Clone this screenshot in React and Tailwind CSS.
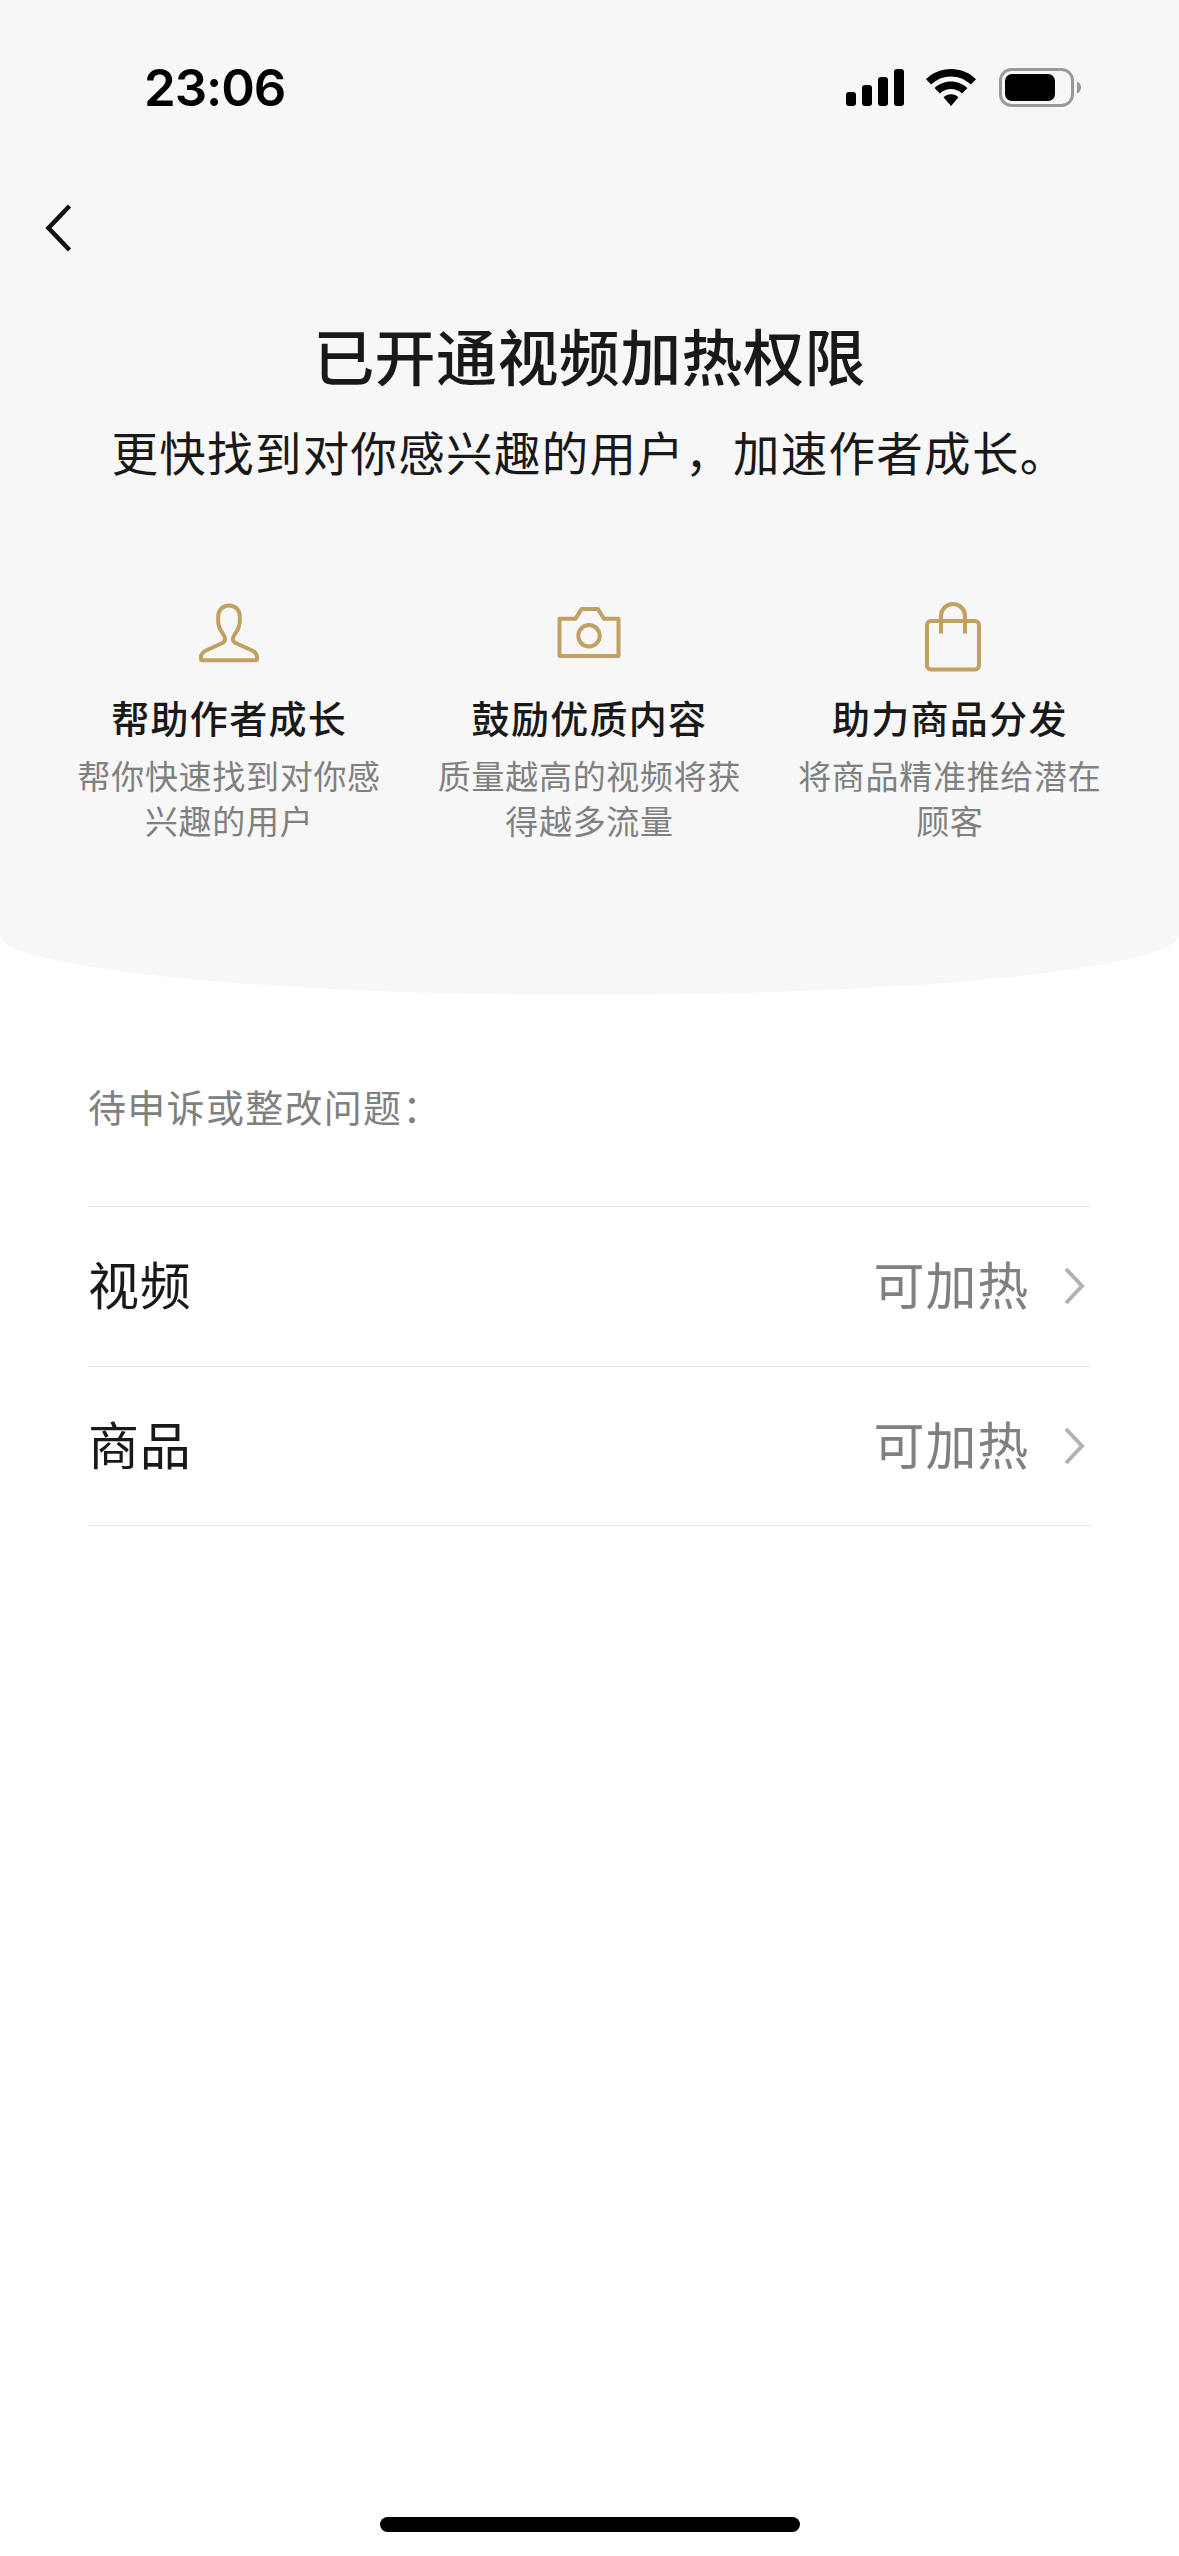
const features = [
    {
        icon: (
            <svg viewBox="0 0 72 72" fill="none" stroke="currentColor" strokeWidth="4" strokeLinejoin="round" className="w-[72px] h-[72px]">
                <path d="M36 5.500c-6.500 0-10.800 4.800-10.800 10.700v5c0 5 2 8.600 4.600 12.400 1.500 2.200 2.300 3.600 2.300 5.300 0 2.400-1.300 3.500-3.800 4.600L13.500 50.200C9.800 51.900 8 54 8 57.200v1.500c0 1 .5 1.500 1.500 1.500h53c1 0 1.500-.5 1.500-1.500v-1.500c0-3.200-1.800-5.300-5.500-7L43.700 43.500c-2.500-1.100-3.800-2.200-3.800-4.600 0-1.700.8-3.100 2.300-5.300 2.600-3.800 4.600-7.400 4.600-12.400v-5C46.800 10.300 42.500 5.500 36 5.500z" />
            </svg>
        ),
        title: '帮助作者成长',
        description: '帮你快速找到对你感兴趣的用户',
    },
    {
        icon: (
            <svg viewBox="0 0 72 72" fill="none" stroke="currentColor" strokeWidth="4" strokeLinejoin="round" className="w-[72px] h-[72px]">
                <path d="M6.500 18.800h16l6-9.700h16.500l6 9.700h14.500v37.200h-59z" />
                <circle cx="36" cy="35.800" r="10.700" />
            </svg>
        ),
        title: '鼓励优质内容',
        description: '质量越高的视频将获得越多流量',
    },
    {
        icon: (
            <svg viewBox="0 0 72 72" fill="none" stroke="currentColor" strokeWidth="4" className="w-[72px] h-[72px]">
                <rect x="13" y="21" width="52" height="48.500" rx="4" />
                <path d="M27 33.500V16a12 12 0 0 1 24 0v17.500" />
            </svg>
        ),
        title: '助力商品分发',
        description: '将商品精准推给潜在顾客',
    },
];

const issues = [
    { name: '视频', status: '可加热' },
    { name: '商品', status: '可加热' },
];

function StatusBar() {
    return (
        <div className="flex items-center justify-between h-[175px] pl-[144px] pr-[98px]">
            <span className="font-['Inter',sans-serif] font-semibold text-[51px] leading-none tracking-[-1.1px] text-black">23:06</span>
            <div className="flex items-center">
                {/* Signal */}
                <svg width="58" height="40" viewBox="0 0 58 40" fill="#000">
                    <rect x="0" y="24" width="10" height="14" rx="3" />
                    <rect x="16" y="17" width="10" height="21" rx="3" />
                    <rect x="32" y="9" width="10" height="29" rx="3" />
                    <rect x="48" y="1" width="10" height="37" rx="3" />
                </svg>
                {/* Wifi */}
                <svg width="50" height="40" viewBox="0 0 50 40" fill="#000" className="ml-[22px]">
                    <path d="M25 1C15.500 1 6.500 4.700 0 11.200l5.200 5.400C10.500 11.400 17.500 8.500 25 8.500s14.500 2.900 19.800 8.100l5.200-5.400C43.500 4.700 34.500 1 25 1z" />
                    <path d="M25 13.500c-6.200 0-12 2.400-16.400 6.600l5.300 5.400c3-2.900 6.900-4.500 11.100-4.500s8.100 1.600 11.100 4.500l5.300-5.400C37 15.900 31.200 13.500 25 13.500z" />
                    <path d="M25 26.200c-2.900 0-5.500 1.100-7.500 3L25 38l7.500-8.800c-2-1.900-4.600-3-7.500-3z" />
                </svg>
                {/* Battery */}
                <svg width="82" height="40" viewBox="0 0 82 40" className="ml-[23px]">
                    <rect x="1.500" y="1.500" width="72" height="36" rx="11" fill="none" stroke="#999" strokeWidth="3" />
                    <rect x="6" y="6" width="50" height="27" rx="7" fill="#000" />
                    <path d="M78 13.500c2.700 1.100 4 3.300 4 6s-1.300 4.900-4 6z" fill="#999" />
                </svg>
            </div>
        </div>
    );
}

function Feature({ icon, title, description }) {
    return (
        <div className="flex flex-col items-center text-center">
            <div className="text-[#c1a062]">{icon}</div>
            <h3 className="mt-[21px] font-medium text-[38px] leading-[48px] tracking-[1.3px] text-[#191919]">{title}</h3>
            <p className="mt-3 w-[306px] text-[33px] leading-[45px] tracking-[0.7px] text-[#808080]">{description}</p>
        </div>
    );
}

export default function App() {
    return (
        <div className="flex flex-col w-[1179px] h-[2556px] overflow-hidden bg-white font-['Noto_Sans_CJK_SC',sans-serif]">
            <header className="h-[995px] shrink-0 bg-[#f7f7f7] rounded-b-[50%_60px]">
                <StatusBar />
                <nav className="flex items-center h-[106px] pl-[43px]">
                    <svg width="30" height="50" viewBox="0 0 30 50" fill="none" stroke="#111" strokeWidth="4.500">
                        <path d="M26.500 3L5.500 25l21 22" />
                    </svg>
                </nav>
                <div className="flex flex-col items-center pt-[34px]">
                    <h1 className="font-medium text-[61px] leading-[80px] tracking-[0.4px] text-[#191919]">已开通视频加热权限</h1>
                    <p className="mt-6 text-[46.500px] leading-[64px] tracking-[1.3px] text-[#191919]">更快找到对你感兴趣的用户，加速作者成长。</p>
                </div>
                <div className="grid grid-cols-3 mt-[117px] px-[49px]">
                    {features.map((feature) => (
                        <Feature key={feature.title} {...feature} />
                    ))}
                </div>
            </header>

            <main className="grow pt-[84px] px-[88px]">
                <p className="text-[38px] leading-[54px] tracking-[1.3px] text-[#808080]">待申诉或整改问题：</p>
                <ul className="mt-[73px] border-t border-[#e5e5e5]">
                    {issues.map((issue) => (
                        <li key={issue.name} className="flex items-center h-[159.500px] border-b border-[#e5e5e5] text-[51px] leading-[70px] tracking-[0.8px]">
                            <span className="pb-1.5 text-[#191919]">{issue.name}</span>
                            <span className="ml-auto pb-1.5 text-[#808080]">{issue.status}</span>
                            <svg width="24" height="40" viewBox="0 0 24 40" fill="none" stroke="#b2b2b2" strokeWidth="4" className="ml-[34px] mr-[4px]">
                                <path d="M3 3l16 17L3 37" />
                            </svg>
                        </li>
                    ))}
                </ul>
            </main>

            {/* Home indicator */}
            <footer className="flex justify-center pb-6">
                <div className="w-[420px] h-[15px] rounded-full bg-black" />
            </footer>
        </div>
    );
}
